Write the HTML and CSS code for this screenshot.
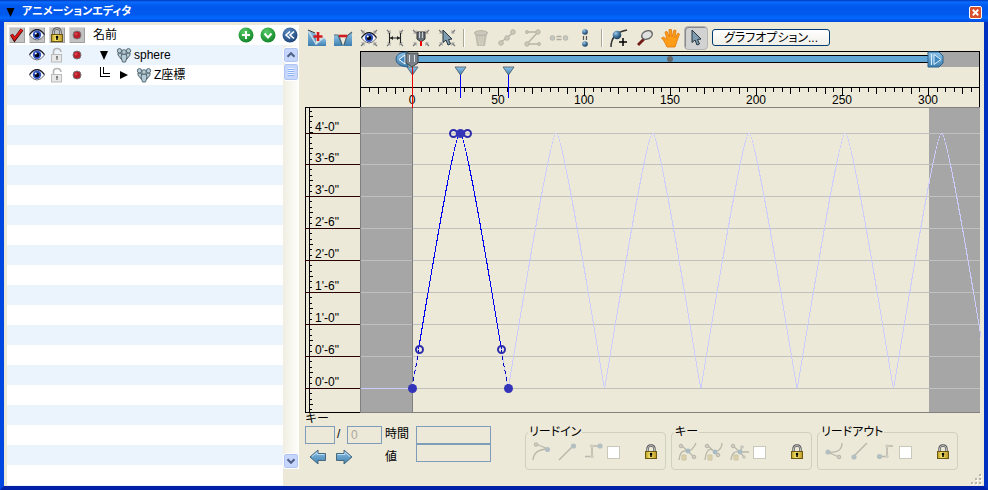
FILE: index.html
```html
<!DOCTYPE html>
<html lang="ja">
<head>
    <meta charset="UTF-8">
    <meta name="viewport" content="width=device-width, initial-scale=1.0">
    <title>アニメーションエディタ</title>
    <link rel="stylesheet" href="styles.css">
</head>
<body>
    <!-- アイコン定義 -->
    <svg class="sprite" aria-hidden="true">
        <defs>
            <linearGradient id="steel" x1="0" y1="0" x2="0" y2="1">
                <stop offset="0" stop-color="#8fc4ea"/><stop offset="1" stop-color="#3f7fae"/>
            </linearGradient>
            <linearGradient id="gold" x1="0" y1="0" x2="1" y2="0">
                <stop offset="0" stop-color="#b89a20"/><stop offset="0.4" stop-color="#f8e870"/><stop offset="1" stop-color="#b89420"/>
            </linearGradient>
            <radialGradient id="ball" cx="0.35" cy="0.3" r="0.8">
                <stop offset="0" stop-color="#9cc8ea"/><stop offset="0.5" stop-color="#3f7099"/><stop offset="1" stop-color="#16324c"/>
            </radialGradient>
            <radialGradient id="green" cx="0.4" cy="0.3" r="0.8">
                <stop offset="0" stop-color="#58cc68"/><stop offset="1" stop-color="#087c20"/>
            </radialGradient>
            <radialGradient id="navy" cx="0.4" cy="0.3" r="0.8">
                <stop offset="0" stop-color="#5c8cc4"/><stop offset="1" stop-color="#153c70"/>
            </radialGradient>
        </defs>
        <symbol id="i-check" viewBox="0 0 16 16"><path d="M2.5 7.5 5.5 12.5 13 2.500" fill="none" stroke="#400" stroke-width="3.4"/><path d="M2.5 7.5 5.5 12 13 2.500" fill="none" stroke="#e01818" stroke-width="2.2"/></symbol>
        <symbol id="i-eye" viewBox="0 0 16 16"><path d="M0.500 8Q4 3 8 3T15.500 8Q12 13 8 13T0.500 8Z" fill="#fff" stroke="#556" stroke-width="0.900"/><circle cx="8" cy="7.800" r="4.200" fill="#2c50c0"/><circle cx="8" cy="8" r="2.300" fill="#000418"/><circle cx="6.800" cy="6.600" r="1" fill="#fff"/><path d="M0.500 7.500Q4 2.500 8 2.500T15.500 7.500" fill="none" stroke="#112" stroke-width="1.200"/></symbol>
        <symbol id="i-lock" viewBox="0 0 16 16"><path d="M4.500 8V5Q4.500 1.500 8 1.500T11.500 5V8" fill="none" stroke="#555" stroke-width="2.400"/><path d="M4.500 8V5Q4.500 1.500 8 1.500T11.500 5V8" fill="none" stroke="#ccc" stroke-width="0.900"/><rect x="2.500" y="7.500" width="11" height="7" fill="url(#gold)" stroke="#6c5810"/><circle cx="8" cy="10" r="1.300"/><path d="M8 10V13" stroke="#000" stroke-width="1.500"/></symbol>
        <symbol id="i-unlock" viewBox="0 0 16 16"><path d="M4.500 8V4Q5 1.500 8 1.500Q11.500 1.500 12 5" fill="none" stroke="#b4b4b4" stroke-width="1.600"/><rect x="2.500" y="7.500" width="10" height="7.500" fill="#e8e8e8" stroke="#bbb"/><path d="M8 9V13M7 10H9" stroke="#777" stroke-width="1.300"/></symbol>
        <symbol id="i-dot" viewBox="0 0 16 16"><circle cx="8" cy="8" r="4" fill="#b81c28" stroke="#777" stroke-width="1"/><circle cx="7" cy="7" r="1.500" fill="#d84050"/></symbol>
        <symbol id="i-plus" viewBox="0 0 16 16"><circle cx="8" cy="8" r="7.500" fill="url(#green)"/><path d="M8 4V12M4 8H12" stroke="#fff" stroke-width="2"/></symbol>
        <symbol id="i-down" viewBox="0 0 16 16"><circle cx="8" cy="8" r="7.500" fill="url(#green)"/><path d="M4.500 6.500 8 10.500 11.500 6.500" fill="none" stroke="#fff" stroke-width="2"/></symbol>
        <symbol id="i-rewind" viewBox="0 0 16 16"><circle cx="8" cy="8" r="7.500" fill="url(#navy)"/><path d="M8 4.500 4 8 8 11.500M12 4.500 8 8 12 11.500" fill="none" stroke="#fff" stroke-width="1.600"/></symbol>
        <symbol id="i-object" viewBox="0 0 16 16"><g fill="#b4ccd8" stroke="#4c5c64" stroke-width="0.900"><path d="M2 6 5 6 6 9 8 9 8 13 5 12 2 8Z"/><path d="M14 6 11 6 10 9 8 9 8 13 11 12 14 8Z"/><path d="M6 7H10L11 10 9.500 15H6.500L5 10Z"/><circle cx="3.500" cy="3.800" r="2.200"/><circle cx="12.500" cy="3.800" r="2.200"/><circle cx="8" cy="5" r="2.300"/></g></symbol>

        <symbol id="i-keyadd" viewBox="0 0 20 20"><path d="M1 2 9 6V18H1Z" fill="url(#steel)"/><path d="M9 16 17 10 19 12V18H9Z" fill="url(#steel)"/><path d="M1 2 9 16 17 9" fill="none" stroke="#c8dce4" stroke-width="1.500"/><path d="M1 2 8 5" stroke="#333"/><path d="M11 4V13M6.500 8.500H15.500" stroke="#d01c20" stroke-width="2.600"/></symbol>
        <symbol id="i-keydel" viewBox="0 0 20 20"><path d="M1 7 7 8 10 18H1Z" fill="url(#steel)"/><path d="M10 18 14 8 19 4V18Z" fill="url(#steel)"/><path d="M1 7 5 7 9 17M11 17 14 8 19 4" fill="none" stroke="#50646c" stroke-width="1.200"/><path d="M6 8H14" stroke="#d01c20" stroke-width="2.600"/></symbol>
        <symbol id="i-corners" viewBox="0 0 20 20"><path d="M2 2 5 5M18 2 15 5M2 18 5 15M18 18 15 15" stroke="#777" stroke-width="1.200"/><path d="M5.500 2V5.500H2ZM14.500 2V5.500H18ZM5.500 18V14.500H2ZM14.500 18V14.500H18Z" fill="#999"/></symbol>
        <symbol id="i-fiteye" viewBox="0 0 20 20"><use href="#i-corners"/><use href="#i-eye" x="2" y="2" width="16" height="16"/></symbol>
        <symbol id="i-fitrange" viewBox="0 0 20 20"><use href="#i-corners"/><path d="M4.500 5V15M15.500 5V15M5 10H15" stroke="#222" stroke-width="1.100"/><path d="M5 10 8 8V12ZM15 10 12 8V12Z" fill="#222"/></symbol>
        <symbol id="i-fittime" viewBox="0 0 20 20"><use href="#i-corners"/><path d="M6 4H14V11L10 14 6 11Z" fill="#667078" stroke="#333"/><path d="M8.500 4V10M11.500 4V10" stroke="#ccc"/><path d="M10 13V18" stroke="#e00" stroke-width="2"/></symbol>
        <symbol id="i-arrow" viewBox="0 0 20 20"><path d="M6 2V14.500L9 12 11 17 13.500 16 11.500 11.500 15 11Z" fill="#7f9cb0" stroke="#26343e" stroke-width="1"/></symbol>
        <symbol id="i-fitsel" viewBox="0 0 20 20"><use href="#i-corners"/><use href="#i-arrow" width="20" height="20"/></symbol>
        <symbol id="i-trash" viewBox="0 0 20 20"><path d="M4 6H16L14 18H6Z" fill="#c2beb0"/><ellipse cx="10" cy="5" rx="6.500" ry="2.300" fill="#ccc8bc" stroke="#b4b0a2"/><path d="M7.500 8 8.500 17M10 8V17M12.500 8 11.500 17" stroke="#d8d4c6"/></symbol>
        <symbol id="i-linear" viewBox="0 0 20 20"><path d="M3 15 17 4" stroke="#b8b5a6" stroke-width="1.500"/><g fill="#ccc9bb" stroke="#b8b5a6"><circle cx="4" cy="15" r="2.300"/><circle cx="10" cy="10" r="2.300"/><circle cx="16" cy="4" r="2.300"/></g></symbol>
        <symbol id="i-step" viewBox="0 0 20 20"><path d="M3 4H15L4 16H17" fill="none" stroke="#b8b5a6" stroke-width="1.500"/><g fill="#ccc9bb" stroke="#b8b5a6"><circle cx="4" cy="4" r="1.500"/><circle cx="15" cy="4" r="2.200"/><circle cx="4" cy="16" r="2.200"/><circle cx="16" cy="16" r="1.500"/></g></symbol>
        <symbol id="i-equalh" viewBox="0 0 20 20"><g fill="#c4c9c6" stroke="#b8b5a6"><circle cx="3.500" cy="10" r="2.300"/><circle cx="16.500" cy="10" r="2.300"/></g><path d="M7.500 8.500H12.500M7.500 11.500H12.500" stroke="#b0ad9e" stroke-width="1.500"/></symbol>
        <symbol id="i-equalv" viewBox="0 0 20 20"><circle cx="10" cy="4" r="2.800" fill="url(#ball)"/><circle cx="10" cy="16" r="2.800" fill="url(#ball)"/><path d="M8.500 8V12M11.500 8V12" stroke="#555" stroke-width="1.200"/></symbol>
        <symbol id="i-curveadd" viewBox="0 0 20 20"><path d="M2 19Q2 5 18 2" fill="none" stroke="#333" stroke-width="1.500"/><circle cx="8" cy="7" r="4.300" fill="url(#ball)"/><path d="M14 10V18M10 14H18" stroke="#000" stroke-width="1.500"/></symbol>
        <symbol id="i-zoom" viewBox="0 0 20 20"><path d="M3 17 9 11" stroke="#701c14" stroke-width="2.800"/><ellipse cx="12" cy="7" rx="5.500" ry="4" transform="rotate(-25 12 7)" fill="#dde0de" stroke="#666" stroke-width="1.500"/></symbol>
        <symbol id="i-hand" viewBox="0 0 20 20"><path d="M6 19 3 13 0.500 10 2.500 9 6 11.500 4 4 6 3.500 8.500 9 8 1.500 10.500 1.500 11 9 13 2 15 2.500 14 10 17 5 18.500 6 16 13 14 19Z" fill="#ff9c18" stroke="#e07808" stroke-width="0.800"/></symbol>
        <symbol id="i-left" viewBox="0 0 18 16"><path d="M1 8 9 1V4.500H16.500V11.500H9V15Z" fill="url(#steel)" stroke="#48687c"/><path d="M3 7.500 8 3.500V5.500H15.500" fill="none" stroke="#b8dcf4"/></symbol>
        <symbol id="i-right" viewBox="0 0 18 16"><path d="M17 8 9 1V4.500H1.500V11.500H9V15Z" fill="url(#steel)" stroke="#48687c"/><path d="M15 7.500 10 3.500V5.500H2.500" fill="none" stroke="#b8dcf4"/></symbol>

        <symbol id="i-in1" viewBox="0 0 20 20"><path d="M1 18Q2 7 16 7M4 2 16 7" fill="none" stroke="#b9b7a9" stroke-width="1.300"/><circle cx="4" cy="2.500" r="1.800" fill="#d0cec2" stroke="#b9b7a9"/><circle cx="15.500" cy="7.500" r="2.600" fill="#b4bfc2"/></symbol>
        <symbol id="i-in2" viewBox="0 0 20 20"><path d="M1 18 15 4" stroke="#b9b7a9" stroke-width="1.500"/><circle cx="15.500" cy="4" r="2.600" fill="#b4bfc2"/></symbol>
        <symbol id="i-in3" viewBox="0 0 20 20"><path d="M1 14.500H8V4H16" fill="none" stroke="#b9b7a9" stroke-width="1.500"/><circle cx="8" cy="14.500" r="1.800" fill="#d0cec2"/><circle cx="7.500" cy="4" r="1.800" fill="#d0cec2"/><circle cx="16" cy="4" r="2.600" fill="#b4bfc2"/></symbol>
        <symbol id="i-key1" viewBox="0 0 20 20"><path d="M1 18Q2 8 8 9T18 1M3 3 16 15" fill="none" stroke="#b9b7a9" stroke-width="1.300"/><circle cx="3" cy="4" r="1.800" fill="#d0cec2" stroke="#b9b7a9"/><circle cx="16" cy="15" r="1.800" fill="#d0cec2" stroke="#b9b7a9"/><circle cx="10" cy="9" r="2.400" fill="#a9bcc4"/><path d="M4 18V13H8V18Z" fill="#dcd2a8" stroke="#ccc4a8"/></symbol>
        <symbol id="i-key2" viewBox="0 0 20 20"><path d="M1 18Q3 2 11 10Q18 8 18 1M3 3 14 13" fill="none" stroke="#b9b7a9" stroke-width="1.300"/><circle cx="3" cy="4" r="1.800" fill="#d0cec2" stroke="#b9b7a9"/><circle cx="14" cy="13" r="1.800" fill="#d0cec2" stroke="#b9b7a9"/><circle cx="11" cy="10" r="2.400" fill="#a9bcc4"/><path d="M4 18V13H8V18Z" fill="#dcd2a8" stroke="#ccc4a8"/></symbol>
        <symbol id="i-key3" viewBox="0 0 20 20"><path d="M1 18Q2 8 10 10H19M3 4 10 10 12 5M10 10 14 15" fill="none" stroke="#b9b7a9" stroke-width="1.300"/><circle cx="3" cy="4" r="1.800" fill="#d0cec2" stroke="#b9b7a9"/><circle cx="12" cy="5" r="1.800" fill="#c4c6bc"/><circle cx="14" cy="15" r="1.800" fill="#c4c6bc"/><circle cx="10" cy="10" r="2.400" fill="#a9bcc4"/><path d="M4 18V13H8V18Z" fill="#dcd2a8" stroke="#ccc4a8"/></symbol>
        <symbol id="i-out1" viewBox="0 0 20 20"><path d="M3 10Q18 12 18 1M3 10 15 15" fill="none" stroke="#b9b7a9" stroke-width="1.300"/><circle cx="4" cy="10" r="2.600" fill="#b4bfc2"/><circle cx="15" cy="15" r="1.800" fill="#d0cec2" stroke="#b9b7a9"/></symbol>
        <symbol id="i-out2" viewBox="0 0 20 20"><path d="M4 14 17 1" stroke="#b9b7a9" stroke-width="1.500"/><circle cx="4" cy="15" r="2.600" fill="#b4bfc2"/></symbol>
        <symbol id="i-out3" viewBox="0 0 20 20"><path d="M3 14.500H11V4H17" fill="none" stroke="#b9b7a9" stroke-width="1.500"/><circle cx="11" cy="4" r="1.800" fill="#d0cec2"/><circle cx="11" cy="14.500" r="1.800" fill="#d0cec2"/><circle cx="3.500" cy="14.500" r="2.600" fill="#b4bfc2"/></symbol>
    </svg>

    <div class="window">
        <header class="titlebar">
            <svg class="title-mark" viewBox="0 0 8 9"><path d="M0 0H8L4 9Z"/></svg>
            <h1>アニメーションエディタ</h1>
            <button class="close" aria-label="閉じる"><svg viewBox="0 0 12 12"><path d="M3 3 9 9M9 3 3 9" stroke="#fff" stroke-width="2"/></svg></button>
        </header>

        <main class="content">
            <!-- オブジェクトリスト -->
            <section class="tree">
                <div class="tree-head">
                    <button class="toggle" aria-label="選択"><svg><use href="#i-check"/></svg></button>
                    <button class="toggle" aria-label="表示"><svg><use href="#i-eye"/></svg></button>
                    <button class="toggle" aria-label="ロック"><svg><use href="#i-lock"/></svg></button>
                    <button class="toggle" aria-label="記録"><svg><use href="#i-dot"/></svg></button>
                    <span class="tree-title">名前</span>
                    <div class="tree-actions">
                        <button aria-label="追加"><svg><use href="#i-plus"/></svg></button>
                        <button aria-label="展開"><svg><use href="#i-down"/></svg></button>
                        <button aria-label="戻る"><svg><use href="#i-rewind"/></svg></button>
                    </div>
                </div>
                <div class="tree-body">
                    <ul class="rows">
                        <li>
                            <svg><use href="#i-eye"/></svg>
                            <svg><use href="#i-unlock"/></svg>
                            <svg><use href="#i-dot"/></svg>
                            <svg class="twist"><path d="M4 4H12L8 13Z"/></svg>
                            <svg><use href="#i-object"/></svg>
                            <span>sphere</span>
                        </li>
                        <li>
                            <svg><use href="#i-eye"/></svg>
                            <svg><use href="#i-unlock"/></svg>
                            <svg><use href="#i-dot"/></svg>
                            <svg class="twist"><path d="M4.500 0V9.500H14M7.500 0V6.500H14" fill="none" stroke="#000" shape-rendering="crispEdges"/></svg>
                            <svg class="child"><path d="M4 4V12L12 8Z"/></svg>
                            <svg><use href="#i-object"/></svg>
                            <span>Z座標</span>
                        </li>
                    </ul>
                    <div class="scrollbar">
                        <button aria-label="上へ"><svg viewBox="0 0 16 16"><path d="M4 10 8 6 12 10" fill="none" stroke="#4d6185" stroke-width="2.400"/></svg></button>
                        <div class="thumb"></div>
                        <button class="scroll-down" aria-label="下へ"><svg viewBox="0 0 16 16"><path d="M4 6 8 10 12 6" fill="none" stroke="#4d6185" stroke-width="2.400"/></svg></button>
                    </div>
                </div>
            </section>

            <section class="editor">
                <div class="toolbar">
                    <button aria-label="キーを追加"><svg><use href="#i-keyadd"/></svg></button>
                    <button aria-label="キーを削除"><svg><use href="#i-keydel"/></svg></button>
                    <button aria-label="全体を表示"><svg><use href="#i-fiteye"/></svg></button>
                    <button aria-label="範囲を表示"><svg><use href="#i-fitrange"/></svg></button>
                    <button aria-label="現在時間を表示"><svg><use href="#i-fittime"/></svg></button>
                    <button aria-label="選択を表示"><svg><use href="#i-fitsel"/></svg></button>
                    <span class="sep"></span>
                    <button disabled aria-label="削除"><svg><use href="#i-trash"/></svg></button>
                    <button disabled aria-label="リニア"><svg><use href="#i-linear"/></svg></button>
                    <button disabled aria-label="ステップ"><svg><use href="#i-step"/></svg></button>
                    <button disabled aria-label="時間を揃える"><svg><use href="#i-equalh"/></svg></button>
                    <button aria-label="値を揃える"><svg><use href="#i-equalv"/></svg></button>
                    <span class="sep"></span>
                    <button aria-label="ポイント追加"><svg><use href="#i-curveadd"/></svg></button>
                    <button aria-label="ズーム"><svg><use href="#i-zoom"/></svg></button>
                    <button aria-label="移動"><svg><use href="#i-hand"/></svg></button>
                    <button class="pressed" aria-label="選択ツール"><svg><use href="#i-arrow"/></svg></button>
                    <button class="options">グラフオプション...</button>
                </div>

                <svg class="chart" id="chart" role="img" aria-label="Z座標のグラフ"></svg>

                <div class="controls">
                    <form class="key-form">
                        <span class="key-title">キー</span>
                        <div class="key-index">
                            <input type="text" class="key-now" aria-label="キー番号">
                            <span class="slash">/</span>
                            <input type="text" class="key-count" value="0" disabled aria-label="キー数">
                        </div>
                        <label for="time">時間</label>
                        <input type="text" id="time">
                        <div class="key-nav">
                            <button type="button" aria-label="前のキー"><svg><use href="#i-left"/></svg></button>
                            <button type="button" aria-label="次のキー"><svg><use href="#i-right"/></svg></button>
                        </div>
                        <label for="value">値</label>
                        <input type="text" id="value">
                    </form>
                    <fieldset>
                        <legend>リードイン</legend>
                        <div class="group">
                            <button disabled aria-label="カーブ"><svg><use href="#i-in1"/></svg></button>
                            <button disabled aria-label="直線"><svg><use href="#i-in2"/></svg></button>
                            <button disabled aria-label="ステップ"><svg><use href="#i-in3"/></svg></button>
                            <input type="checkbox" disabled aria-label="リードイン">
                            <button class="lock" aria-label="ロック"><svg><use href="#i-lock"/></svg></button>
                        </div>
                    </fieldset>
                    <fieldset>
                        <legend>キー</legend>
                        <div class="group">
                            <button disabled aria-label="スムーズ"><svg><use href="#i-key1"/></svg></button>
                            <button disabled aria-label="対称"><svg><use href="#i-key2"/></svg></button>
                            <button disabled aria-label="コーナー"><svg><use href="#i-key3"/></svg></button>
                            <input type="checkbox" disabled aria-label="キー">
                            <button class="lock" aria-label="ロック"><svg><use href="#i-lock"/></svg></button>
                        </div>
                    </fieldset>
                    <fieldset>
                        <legend>リードアウト</legend>
                        <div class="group">
                            <button disabled aria-label="カーブ"><svg><use href="#i-out1"/></svg></button>
                            <button disabled aria-label="直線"><svg><use href="#i-out2"/></svg></button>
                            <button disabled aria-label="ステップ"><svg><use href="#i-out3"/></svg></button>
                            <input type="checkbox" disabled aria-label="リードアウト">
                            <button class="lock" aria-label="ロック"><svg><use href="#i-lock"/></svg></button>
                        </div>
                    </fieldset>
                </div>
            </section>
        </main>
        <svg class="grip" aria-hidden="true"><path d="M9 1h2v2h-2zM5 5h2v2h-2zM9 5h2v2h-2zM1 9h2v2h-2zM5 9h2v2h-2zM9 9h2v2h-2z" fill="#fff"/><path d="M8 0h2v2h-2zM4 4h2v2h-2zM8 4h2v2h-2zM0 8h2v2h-2zM4 8h2v2h-2zM8 8h2v2h-2z" fill="#b8b4a4"/></svg>
    </div>
    <script src="chart.js"></script>
</body>
</html>
```

FILE: styles.css
```css
* {
    box-sizing: border-box;
}

body {
    margin: 0;
    font-family: "Liberation Sans", "Noto Sans CJK JP", sans-serif;
    font-size: 12px;
    line-height: 16px;
    color: #000;
}

button {
    padding: 0;
    border: none;
    background: none;
    font: inherit;
}

svg {
    display: block;
    flex: none;
    width: 16px;
    height: 16px;
}

.sprite {
    position: absolute;
    width: 0;
    height: 0;
}

.window {
    position: relative;
    display: flex;
    flex-direction: column;
    min-height: 100vh;
    border: 4px solid #0046e0;
    border-top: none;
    border-right-color: #0030c0;
    border-bottom-color: #0020a8;
    background: #ece9d8;
}

/* タイトルバー */
.titlebar {
    display: flex;
    align-items: center;
    height: 22px;
    margin: 0 -4px;
    padding: 0 6px 0 6px;
    background: linear-gradient(#0038b8, #0a6cff 2px, #0058ec 6px, #0058ec 14px, #0068ff 18px, #0048d8);
    color: #fff;
}

.title-mark {
    width: 9px;
    height: 9px;
    margin: 3px 7px 0 0;
}

.titlebar h1 {
    margin: 0;
    font-size: 11px;
    font-feature-settings: "palt";
}

.close {
    width: 13px;
    height: 13px;
    margin: 2px 0 0 auto;
    border: 1px solid #fff;
    border-radius: 2px;
    background: #d8502c;
}

.close svg {
    width: 11px;
    height: 11px;
}

.content {
    flex: 1;
    display: grid;
    grid-template-columns: 292px 1fr;
    gap: 5px;
    padding: 3px 4px 0 3px;
}

/* オブジェクトリスト */
.tree {
    display: flex;
    flex-direction: column;
}

.tree-head {
    display: flex;
    align-items: center;
    gap: 4px;
    height: 20px;
    padding: 0 1px 0 2px;
    background: #fff;
}

.toggle {
    width: 16px;
    height: 16px;
    background: #c2c2c2;
    box-shadow: inset 1px 1px #d8d8d8, inset -1px -1px #a0a0a0;
}

.tree-title {
    margin-left: 4px;
}

.tree-actions {
    display: flex;
    gap: 6px;
    margin-left: auto;
}

.tree-body {
    flex: 1;
    display: flex;
    background: #ece9d8;
}

.rows {
    flex: 1;
    margin: 0;
    padding: 0 0 0 1px;
    list-style: none;
    background: repeating-linear-gradient(#ebf3fd 0, #ebf3fd 20px, #fff 20px, #fff 40px);
}

.rows li {
    display: flex;
    align-items: center;
    gap: 4px;
    height: 20px;
    padding-left: 21px;
}

.rows .twist {
    margin-left: 7px;
}

.rows span {
    margin-left: -2px;
}

.scrollbar {
    display: flex;
    flex-direction: column;
    width: 16px;
    padding-top: 2px;
    margin-bottom: 17px;
    background: linear-gradient(90deg, #f0eee2, #fefefb);
}

.scrollbar button,
.thumb {
    width: 16px;
    height: 16px;
    border: 1px solid #fff;
    border-radius: 3px;
    background: #c6d6fc;
    box-shadow: inset 0 0 0 1px #b0c4f0;
}

.scrollbar button svg {
    width: 14px;
    height: 14px;
}

.thumb {
    height: 18px;
    background: repeating-linear-gradient(#eef4fe 0, #eef4fe 1px, #8cb0f8 1px, #8cb0f8 2px) center / 6px 8px no-repeat #c6d6fc;
}

.scroll-down {
    margin-top: auto;
}

/* グラフ */
.editor {
    min-width: 0;
}

.toolbar {
    display: flex;
    align-items: center;
    height: 26px;
    padding-bottom: 1px;
}

.toolbar button {
    display: grid;
    place-items: center;
    width: 26px;
    height: 24px;
}

.toolbar button svg {
    width: 20px;
    height: 20px;
}

.toolbar .sep {
    width: 2px;
    height: 18px;
    margin: 0 3px;
    border-left: 1px solid #aca899;
    border-right: 1px solid #fff;
}

.toolbar .pressed {
    width: 24px;
    border: 1px solid #b4b4b4;
    border-radius: 4px;
    background: #d2d2d2;
    box-shadow: inset 1px 1px #888;
}

.toolbar .options {
    width: auto;
    height: 17px;
    margin-left: 4px;
    padding: 0 11px;
    border: 1px solid #003c74;
    border-radius: 3px;
    background: linear-gradient(#fff, #f0efe8);
    font-size: 12px;
    line-height: 14px;
    font-feature-settings: "palt";
}

.chart {
    width: 100%;
    height: 362px;
    margin-left: 1px;
    font-size: 12px;
}

/* 下部コントロール */
.controls {
    display: flex;
    align-items: flex-start;
    gap: 5px;
    padding-left: 1px;
}

.key-form {
    display: grid;
    grid-template-columns: 80px 31px 75px;
    grid-template-rows: 13px 18px 18px;
    margin-right: 29px;
}

.key-title {
    grid-column: 1 / 4;
    line-height: 12px;
}

.key-index {
    display: flex;
}

.key-form label {
    line-height: 16px;
}

.key-form label[for="value"] {
    padding-top: 5px;
}

.key-form input {
    width: 100%;
    height: 18px;
    padding: 0 3px;
    border: 1px solid #7f9db9;
    background: #ece9d8;
    font: inherit;
    line-height: 14px;
    color: #aca899;
}

.key-form .key-now {
    width: 30px;
}

.key-form .key-count {
    width: 35px;
}

.slash {
    width: 12px;
    padding-left: 2px;
}

.key-nav {
    display: flex;
    gap: 8px;
    padding: 5px 0 0 4px;
}

.key-nav svg {
    width: 18px;
    height: 16px;
}

fieldset {
    width: 141px;
    height: 45px;
    margin: 12px 0 0;
    padding: 0;
    border: 1px solid #d0d0bf;
    border-radius: 4px;
}

legend {
    margin-left: 2px;
    padding: 0 1px;
    line-height: 14px;
    font-size: 12px;
    font-feature-settings: "palt";
}

.group {
    display: flex;
    align-items: center;
    gap: 6px;
    padding-left: 6px;
    height: 26px;
}

.group button svg {
    width: 20px;
    height: 20px;
}

.group input {
    appearance: none;
    width: 13px;
    height: 13px;
    margin: 0 0 0 -3px;
    border: 1px solid #cac8bb;
    background: #fff;
}

.group .lock {
    margin-left: 17px;
}

.group .lock svg {
    width: 16px;
    height: 16px;
}

.grip {
    position: absolute;
    right: 1px;
    bottom: 0;
    width: 12px;
    height: 12px;
}
```

FILE: chart.js
```js
const NS = 'http://www.w3.org/2000/svg';
const chart = document.getElementById('chart');

// chart geometry
const LEFT = 55;       // plot left edge
const X0 = 107;        // frame 0
const PX = 1.72;       // pixels per frame
const TOP = 56;
const BOTTOM = 361;
const ZERO = 337;      // 0'-0"
const PEAK = 82;       // 4'-0"
const PERIOD = 56;     // frames
const END = 300;

function add(tag, attrs, text, parent) {
    const el = document.createElementNS(NS, tag);
    for (const key in attrs) el.setAttribute(key, attrs[key]);
    if (text) el.textContent = text;
    (parent || chart).appendChild(el);
    return el;
}

function frameX(f) {
    return Math.round(X0 + f * PX);
}

function rect(x, y, width, height, fill) {
    add('rect', { x, y, width: Math.max(width, 0), height, fill });
}

function path(d, attrs) {
    return add('path', Object.assign({ d, fill: 'none' }, attrs));
}

function marker(f) {
    const x = frameX(f);
    rect(x, 20, 1, 27, '#00f');
    path(`M${x - 5} 16H${x + 6}L${x + 0.5} 24Z`, { fill: 'url(#steel)', stroke: '#456', 'stroke-width': 0.8 });
}

function draw() {
    chart.innerHTML = '';
    const W = chart.parentNode.clientWidth - 1;
    const endX = frameX(END);

    // time slider
    rect(LEFT, 0, W - LEFT, 1, '#000');
    rect(LEFT, 1, X0 - LEFT - 8, 15, '#a6a6a6');
    rect(endX, 1, W - endX, 15, '#a6a6a6');
    rect(X0, 12, endX - X0, 4, '#f0e6da');
    rect(X0, 4, endX - X0, 8, '#000');
    rect(X0, 5, endX - X0, 6, '#64a8d8');
    add('circle', { cx: 365, cy: 8, r: 3, fill: '#666' });

    // shaded range and plot frame
    rect(LEFT, TOP, X0 - LEFT, BOTTOM - TOP, '#a6a6a6');
    rect(endX + 1, TOP, W - endX - 1, BOTTOM - TOP, '#a6a6a6');
    rect(LEFT, TOP, W - LEFT, 1, '#808080');
    rect(LEFT, BOTTOM, W - LEFT, 1, '#808080');

    // value ruler
    rect(0, TOP, LEFT, 1, '#000');
    rect(0, BOTTOM, LEFT, 1, '#000');
    rect(0, TOP, 1, BOTTOM - TOP, '#000');
    rect(4, TOP, 1, BOTTOM - TOP, '#000');
    for (let i = -4; i <= 52; i++) {
        const y = Math.round(ZERO - i * 16 / 3);
        if (y > TOP && y < BOTTOM) rect(5, y, i % 3 === 0 ? 3 : 2, 1, '#000');
    }
    for (let i = 0; i <= 8; i++) {
        const y = i === 8 ? PEAK : ZERO - i * 32;
        rect(0, y, LEFT, 1, '#280000');
        rect(LEFT, y, W - LEFT, 1, '#c0c0c0');
        add('text', { x: 10, y: y - 2 }, `${Math.floor(i / 2)}'-${i % 2 ? 6 : 0}"`);
    }
    rect(LEFT, TOP, 1, BOTTOM - TOP, '#808080');
    rect(X0, TOP, 1, BOTTOM - TOP, '#808080');

    // frame ruler
    rect(LEFT, 0, 1, TOP, '#000');
    rect(W - 1, 0, 1, TOP, '#000');
    rect(LEFT, 36, W - LEFT, 1, '#000');
    for (let f = -25; frameX(f) < W; f += 5) {
        const r = (f + 50) % 50;
        const size = r === 0 ? 8 : (r === 20 || r === 40 || f === -20) ? 6 : 4;
        rect(frameX(f), 37, 1, size, '#000');
        if (r === 0) add('text', { x: frameX(f), y: 53, 'text-anchor': 'middle' }, String(f));
    }

    // repeated curve
    rect(LEFT + 1, ZERO, X0 - LEFT, 1, '#ccccff');
    const wave = (f) => {
        const a = X0 + f * PX, m = a + 48, b = a + 96;
        return `M${a} ${ZERO}C${a + 7} 298 ${m - 7} ${PEAK} ${m} ${PEAK}S${b - 7} 298 ${b} ${ZERO}`;
    };
    for (let f = 0; frameX(f) < W; f += PERIOD) {
        path(wave(f), { stroke: '#ccccff', 'shape-rendering': 'crispEdges' });
    }

    // edited key span
    const clip = add('clipPath', { id: 'span' });
    add('rect', { x: X0, y: PEAK, width: 100, height: 216 }, '', clip);
    path(wave(0), { stroke: '#0000f0', 'clip-path': 'url(#span)', 'shape-rendering': 'crispEdges' });
    path('M107 337L114 298M203 337L196 298', { stroke: '#0000c0', 'stroke-dasharray': '4 3', 'shape-rendering': 'crispEdges' });
    [[114, 298], [148, 82], [162, 82], [196, 298]].forEach(([cx, cy]) => {
        add('circle', { cx: cx + 0.5, cy: cy + 0.5, r: 3.5, fill: 'none', stroke: '#2c2cac', 'stroke-width': 2 });
    });
    [[107, 337], [155, 82], [203, 337]].forEach(([cx, cy]) => {
        add('circle', { cx: cx + 0.5, cy: cy + 0.5, r: 4.5, fill: '#3434b8' });
    });

    // markers and slider handles
    marker(0);
    marker(28);
    marker(56);
    rect(X0, 16, 1, 41, '#e80000');
    path('M103 1Q91 1 91 8T103 16Z', { fill: 'url(#steel)', stroke: '#27608c' });
    path('M100 4L94 8.500L100 13Z', { fill: '#4088c0', stroke: '#fff' });
    path('M101 2H113V12L107 16L101 12Z', { fill: '#788088', stroke: '#40484c' });
    path('M104.500 4V11M109.500 4V11', { stroke: '#e0e4e8' });
    path(`M${endX} 1H${endX + 11}L${endX + 15} 5V12L${endX + 11} 16H${endX}Z`, { fill: 'url(#steel)', stroke: '#27608c' });
    path(`M${endX + 3.5} 3V14M${endX + 6} 3.500L${endX + 13} 8.500L${endX + 6} 13.500Z`, { fill: '#4088c0', stroke: '#dcf0ff' });
}

draw();
window.addEventListener('resize', draw);
```
